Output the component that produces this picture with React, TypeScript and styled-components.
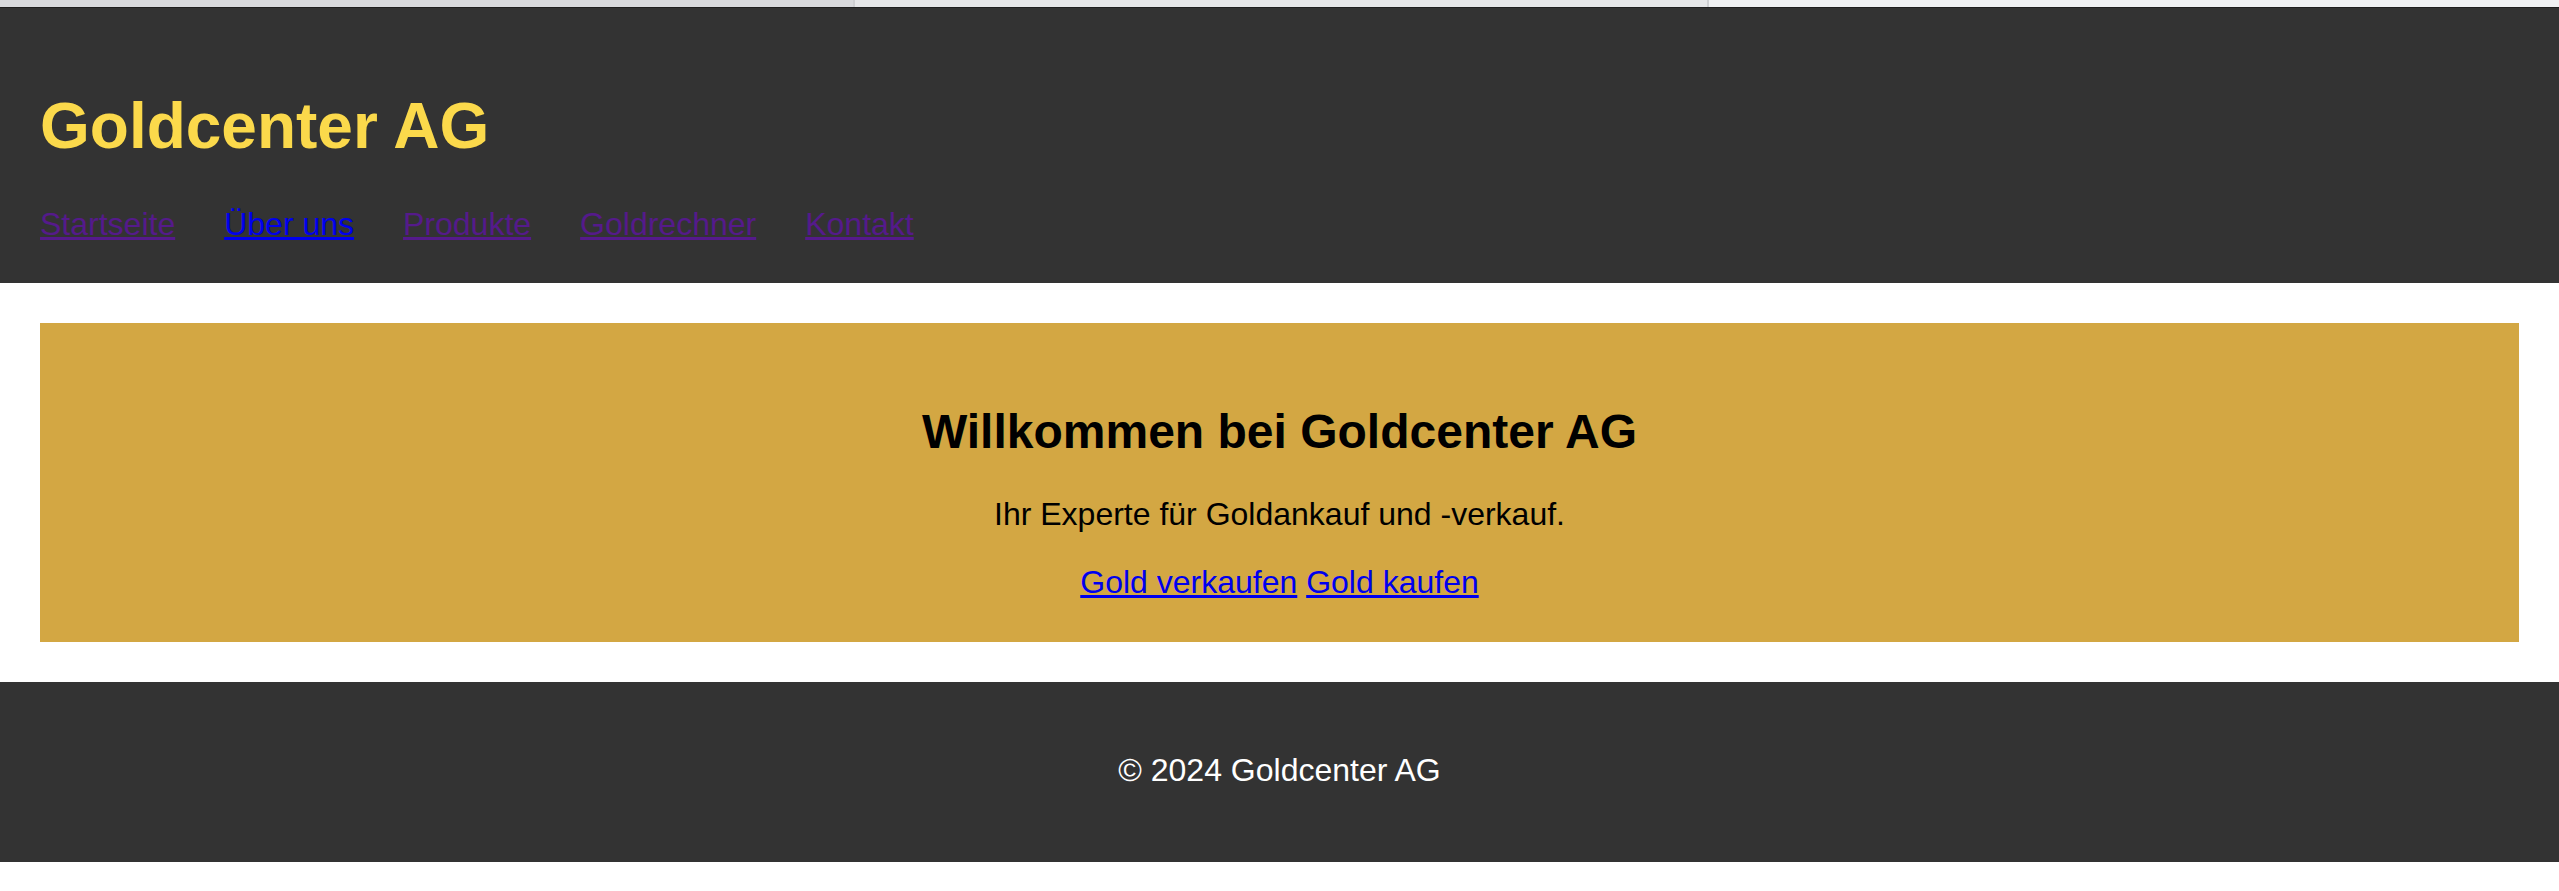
import React from "react";
import styled, { createGlobalStyle } from "styled-components";

const GlobalStyle = createGlobalStyle`
  html, body {
    margin: 0;
    padding: 0;
    background: #ffffff;
  }
  body {
    font-family: "Liberation Sans", Arial, Helvetica, sans-serif;
    font-size: 32px;
    color: #000000;
  }
`;

const TabStrip = styled.div`
  display: flex;
  height: 7px;
  border-bottom: 1px solid #1f1f1f;
`;

const TabSegment = styled.div<{ $tone: string; $width?: string }>`
  flex: ${(p) => (p.$width ? `0 0 ${p.$width}` : "1 1 auto")};
  background: ${(p) => p.$tone};
  border-right: 2px solid #cfd0d3;
  &:last-child {
    border-right: none;
  }
`;

const Header = styled.header`
  background: #333333;
  padding: 40px;
`;

const Title = styled.h1`
  margin: 41px 0 43px;
  font-size: 64px;
  font-weight: bold;
  line-height: normal;
  color: #fbd94b;
`;

const NavList = styled.ul`
  display: flex;
  gap: 49px;
  margin: 0;
  padding: 0;
  list-style: none;
`;

const NavItem = styled.li`
  line-height: normal;
`;

const NavLink = styled.a<{ $visited?: boolean }>`
  color: ${(p) => (p.$visited ? "#551a8b" : "#0000ee")};
  text-decoration: underline;
`;

const Main = styled.main`
  padding: 40px;
`;

const Hero = styled.section`
  background: #d3a743;
  padding: 40px 40px 41px;
  text-align: center;
`;

const HeroTitle = styled.h2`
  margin: 40.8px 0 37.5px;
  font-size: 48px;
  font-weight: bold;
  line-height: normal;
`;

const HeroText = styled.p`
  margin: 0 0 31px;
  line-height: normal;
`;

const Actions = styled.div`
  line-height: normal;
`;

const ActionLink = styled.a`
  color: #0000ee;
  text-decoration: underline;
`;

const Footer = styled.footer`
  background: #333333;
  color: #ffffff;
  text-align: center;
  padding: 40px;
`;

const FooterText = styled.p`
  margin: 30px 0 33px;
  line-height: normal;
`;

const navItems = [
  { label: "Startseite", visited: true },
  { label: "Über uns", visited: false },
  { label: "Produkte", visited: true },
  { label: "Goldrechner", visited: true },
  { label: "Kontakt", visited: true },
];

export default function App() {
  return (
    <>
      <GlobalStyle />
      <TabStrip>
        <TabSegment $tone="#d9dadd" $width="853px" />
        <TabSegment $tone="#e6e7e9" $width="852px" />
        <TabSegment $tone="#f0f1f3" />
      </TabStrip>
      <Header>
        <Title>Goldcenter AG</Title>
        <nav>
          <NavList>
            {navItems.map((item) => (
              <NavItem key={item.label}>
                <NavLink href="#" $visited={item.visited}>
                  {item.label}
                </NavLink>
              </NavItem>
            ))}
          </NavList>
        </nav>
      </Header>
      <Main>
        <Hero>
          <HeroTitle>Willkommen bei Goldcenter AG</HeroTitle>
          <HeroText>Ihr Experte für Goldankauf und -verkauf.</HeroText>
          <Actions>
            <ActionLink href="#">Gold verkaufen</ActionLink>{" "}
            <ActionLink href="#">Gold kaufen</ActionLink>
          </Actions>
        </Hero>
      </Main>
      <Footer>
        <FooterText>© 2024 Goldcenter AG</FooterText>
      </Footer>
    </>
  );
}
